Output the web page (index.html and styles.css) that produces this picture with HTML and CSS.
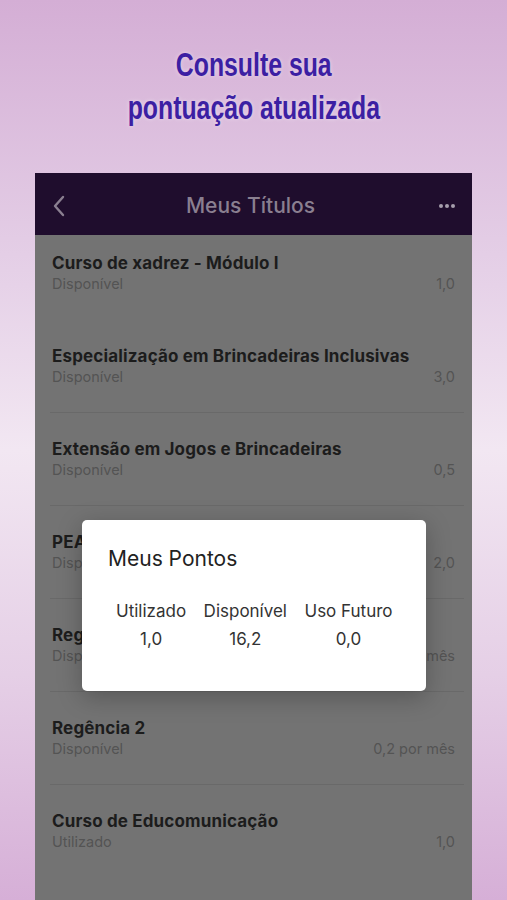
FILE: index.html
```html
<!DOCTYPE html>
<html lang="pt-BR">
<head>
    <meta charset="UTF-8">
    <meta name="viewport" content="width=device-width, initial-scale=1.0">
    <title>Meus Títulos</title>
    <link rel="stylesheet" href="styles.css">
</head>
<body>
    <div class="screen">
        <h1 class="headline"><span>Consulte sua</span><br><span>pontuação atualizada</span></h1>

        <div class="phone">
            <div class="topbar">
                <svg class="back" width="14" height="22" viewBox="0 0 14 22">
                    <path d="M11 2 L3 11 L11 20" fill="none" stroke="#8a7f90" stroke-width="2.4" stroke-linecap="round" stroke-linejoin="round"/>
                </svg>
                <div class="topbar-title">Meus Títulos</div>
                <div class="more"><span></span><span></span><span></span></div>
            </div>

            <!-- lista de títulos -->
            <div class="list">
                <div class="row first">
                    <div class="row-title">Curso de xadrez - Módulo I</div>
                    <div class="row-info"><span>Disponível</span><span>1,0</span></div>
                </div>
                <div class="row">
                    <div class="row-title">Especialização em Brincadeiras Inclusivas</div>
                    <div class="row-info"><span>Disponível</span><span>3,0</span></div>
                </div>
                <div class="row">
                    <div class="row-title">Extensão em Jogos e Brincadeiras</div>
                    <div class="row-info"><span>Disponível</span><span>0,5</span></div>
                </div>
                <div class="row">
                    <div class="row-title">PEA</div>
                    <div class="row-info"><span>Disponível</span><span>2,0</span></div>
                </div>
                <div class="row">
                    <div class="row-title">Regência 1</div>
                    <div class="row-info"><span>Disponível</span><span>0,2 por mês</span></div>
                </div>
                <div class="row">
                    <div class="row-title">Regência 2</div>
                    <div class="row-info"><span>Disponível</span><span>0,2 por mês</span></div>
                </div>
                <div class="row">
                    <div class="row-title">Curso de Educomunicação</div>
                    <div class="row-info"><span>Utilizado</span><span>1,0</span></div>
                </div>
            </div>

            <!-- popup de pontos -->
            <div class="dialog">
                <div class="dialog-title">Meus Pontos</div>
                <div class="points">
                    <div class="point">
                        <div>Utilizado</div>
                        <div>1,0</div>
                    </div>
                    <div class="point">
                        <div>Disponível</div>
                        <div>16,2</div>
                    </div>
                    <div class="point">
                        <div>Uso Futuro</div>
                        <div>0,0</div>
                    </div>
                </div>
            </div>
        </div>
    </div>
</body>
</html>
```

FILE: styles.css
```css
*{
    margin: 0;
    padding: 0;
    box-sizing: border-box;
}
body{
    font-family: "Inter", "Noto Sans", sans-serif;
}
.screen{
    height: 900px;
    overflow: hidden;
    background: linear-gradient(180deg, #d4aed5 0%, #e5d0e7 30%, #f2e7f2 50%, #e5cfe6 75%, #d6afd7 100%);
}
.headline{
    padding-top: 43px;
    text-align: center;
    font-family: "Liberation Sans", "Arial", sans-serif;
    font-weight: bold;
    font-size: 34px;
    line-height: 43px;
    color: #3c1fa3;
    text-shadow: 0 0 5px rgba(255, 255, 255, 0.45);
}
.headline span{
    display: inline-block;
    transform: scaleX(0.73);
}
.phone{
    position: relative;
    margin: 44px 35px 0 35px;
    background-color: #737373;
    height: 760px;
}
.topbar{
    height: 62px;
    background-color: #1f0d2d;
    display: flex;
    align-items: center;
    padding: 3px 17px 0 17px;
}
.back{
    display: block;
}
.topbar-title{
    flex: 1;
    text-align: center;
    font-size: 21px;
    font-weight: 500;
    color: #8a7f90;
    padding-right: 4px;
}
.more{
    display: flex;
    gap: 2px;
}
.more span{
    width: 4px;
    height: 4px;
    border-radius: 50%;
    background-color: #a69eac;
}
.row{
    height: 93px;
    margin-left: 15px;
    margin-right: 8px;
    padding: 26px 9px 0 2px;
    border-top: 1px solid #696969;
}
.row.first{
    height: 84px;
    padding-top: 18px;
    border-top: none;
}
.row.first + .row{
    border-top-color: transparent;
}
.row-title{
    font-size: 17px;
    font-weight: 700;
    line-height: 20px;
    letter-spacing: 0.15px;
    color: #1c1c1c;
}
.row-info{
    display: flex;
    justify-content: space-between;
    margin-top: 2px;
    font-size: 14.5px;
    line-height: 18px;
    color: #545454;
}
.dialog{
    position: absolute;
    top: 347px;
    left: 47px;
    width: 344px;
    height: 171px;
    background-color: #fff;
    border-radius: 5px;
    box-shadow: 0 6px 24px rgba(0, 0, 0, 0.25);
    padding: 26px 26px 0 26px;
    color: #222;
}
.dialog-title{
    font-size: 21px;
    line-height: 26px;
}
.points{
    display: flex;
    gap: 17.5px;
    margin-top: 25px;
    padding-left: 8px;
    font-size: 17px;
    line-height: 28px;
    color: #333;
}
.point{
    text-align: center;
}
```
